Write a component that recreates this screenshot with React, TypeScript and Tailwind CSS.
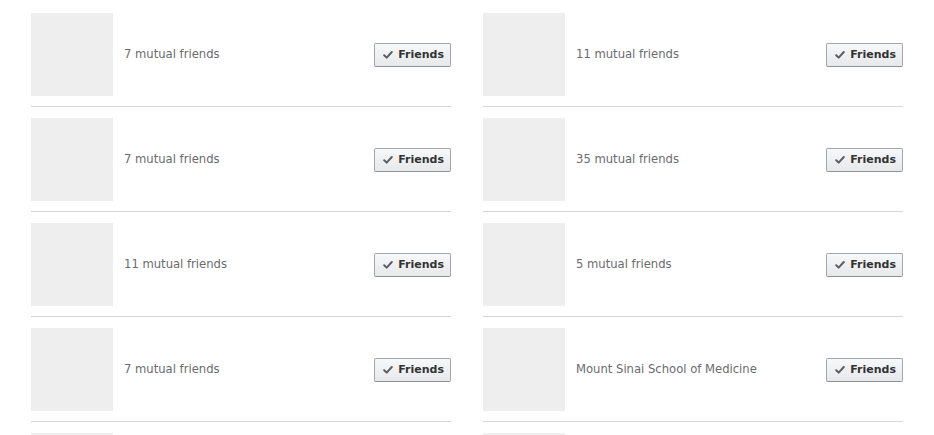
const people = [
  "7 mutual friends",
  "11 mutual friends",
  "7 mutual friends",
  "35 mutual friends",
  "11 mutual friends",
  "5 mutual friends",
  "7 mutual friends",
  "Mount Sinai School of Medicine",
];

const CheckIcon = () => (
  <svg width="10" height="9" viewBox="0 0 10 9" className="shrink-0">
    <path d="M1.2 5.2 L3.7 7.6 L8.8 2" fill="none" stroke="#5b5e63" strokeWidth="2" strokeLinecap="round" strokeLinejoin="round" />
  </svg>
);

const FriendButton = () => (
  <button className="flex items-center gap-[5px] h-[24px] pl-[8px] pr-[6px] border border-[#a3a6ab] border-b-[#8d9096] rounded-[2px] bg-gradient-to-b from-[#f7f8f9] to-[#e7e8ea] text-[11px] font-bold text-[#333] leading-none">
    <CheckIcon />
    <span>Friends</span>
  </button>
);

const FriendRow = ({ label }: { label: string }) => (
  <div className="flex items-center pt-[11px] pb-[10px] border-b border-[#d3d4d6]">
    <div className="w-[82px] h-[83px] bg-[#eeeeee] shrink-0" />
    <div className="ml-[11px] flex-1 pt-px text-[11.6px] text-[#6a6b6f]">{label}</div>
    <FriendButton />
  </div>
);

export default function App() {
  return (
    <div
      className="w-[934px] h-[435px] overflow-hidden bg-white px-[31px] pt-[2px]"
      style={{ fontFamily: '"DejaVu Sans", "Liberation Sans", sans-serif' }}
    >
      <div className="grid grid-cols-2 gap-x-[32px]">
        {people.map((p, i) => (
          <FriendRow key={i} label={p} />
        ))}
        <div className="pt-[11px]">
          <div className="w-[82px] h-[83px] bg-[#eeeeee]" />
        </div>
        <div className="pt-[11px]">
          <div className="w-[82px] h-[83px] bg-[#eeeeee]" />
        </div>
      </div>
    </div>
  );
}
